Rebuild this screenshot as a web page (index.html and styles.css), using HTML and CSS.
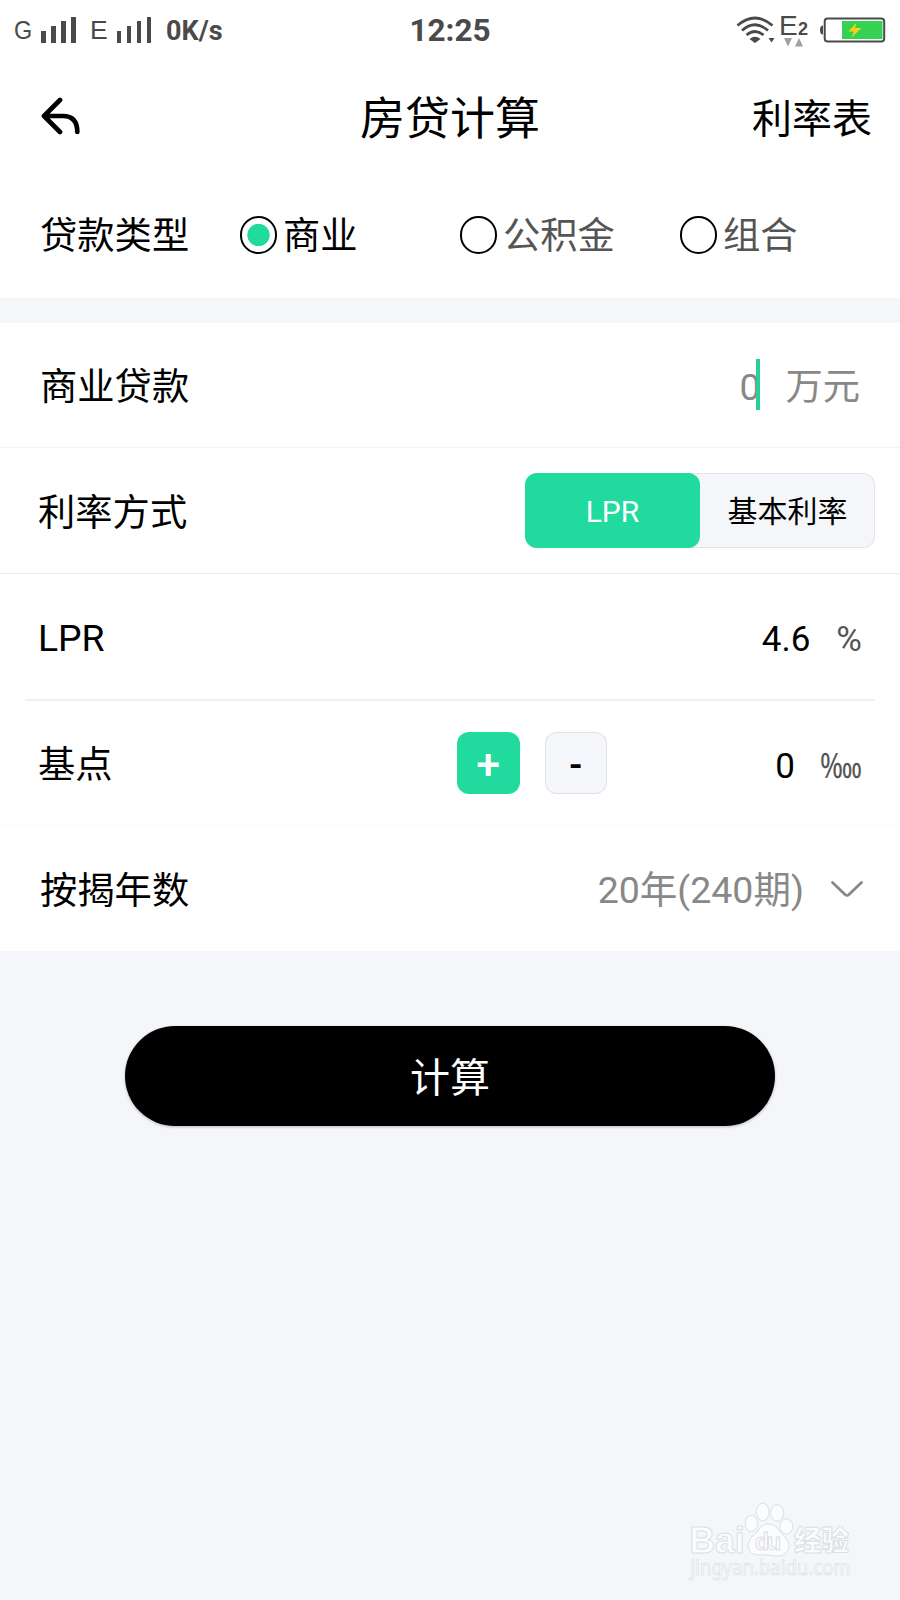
FILE: index.html
```
<!DOCTYPE html>
<html lang="zh-CN">
<head>
<meta charset="utf-8">
<title>房贷计算</title>
<link rel="stylesheet" href="styles.css">
</head>
<body>
<div class="screen">
  <div class="status">
    <div class="status-left">
      <span class="net">G</span>
      <svg class="bars" width="36" height="26" viewBox="0 0 36 26" fill="#4a4a4a"><path d="M0 14h5v12H0zM10 9h5v17h-5zM20 4h5v22h-5zM30 0h5v26h-5z"/></svg>
      <span class="net net-e">E</span>
      <svg class="bars" width="36" height="26" viewBox="0 0 36 26" fill="#4a4a4a"><path d="M0 14h4v12H0zM10 9h4v17h-4zM20 4h4v22h-4zM30 0h4v26h-4z"/></svg>
      <span class="speed">0K/s</span>
    </div>
    <div class="clock">12:25</div>
    <div class="status-right">
      <svg width="40" height="32" viewBox="736 14 40 32" fill="none" stroke="#4a4a4a" stroke-width="2.7"><path d="M737.5 25.5Q755 10.500 772.500 25.500M742 30.500Q755 19 768 30.500M746.500 35Q755 28 763.500 35"/><path d="M749.500 39Q755 34.500 760.500 39L755 43z" fill="#4a4a4a" stroke="none"/><path d="M768.500 38h6l-3 4.500z" fill="#4a4a4a" stroke="none"/></svg>
      <div class="sim">
        <div class="sim-top"><span class="net sim-e">E</span><b class="sim-n">2</b></div>
        <svg class="sim-arrows" width="20" height="9" viewBox="0 0 20 9" fill="#a0a0a0"><path d="M0 0h8L4 8.500zM11 8.500h8L15 0z"/></svg>
      </div>
      <svg width="66" height="26" viewBox="820 17 66 26"><path d="M823 25.500q-3 0-3 4.500t3 4.500z" fill="#4a4a4a"/><rect x="824.700" y="18.500" width="59.500" height="23" rx="3" fill="#fff" stroke="#4a4a4a" stroke-width="2"/><rect x="842" y="21" width="40.500" height="18" fill="#35d152"/><path d="M856.500 22.500L848.500 31.500h5.500L851.500 37.500L861.500 28h-6.500z" fill="#f5d31c"/></svg>
    </div>
  </div>

  <div class="header">
    <svg class="back" width="40" height="38" viewBox="41 97 40 38" fill="none" stroke="#000" stroke-width="4.700" stroke-linecap="round" stroke-linejoin="round"><path d="M60 100L44 116L60 132M44 116H63C72 116 77.300 121 77.300 132"/></svg>
    <div class="title">房贷计算</div>
    <div class="rates">利率表</div>
  </div>

  <div class="types">
    <div class="types-label">贷款类型</div>
    <div class="radio on"><i class="dot"></i><span>商业</span></div>
    <div class="radio"><i class="dot"></i><span>公积金</span></div>
    <div class="radio"><i class="dot"></i><span>组合</span></div>
  </div>

  <div class="rows">
    <div class="row amount">
      <span class="label">商业贷款</span>
      <span class="hint">0</span><i class="caret"></i>
      <span class="unit-wan">万元</span>
    </div>
    <div class="row mode">
      <span class="label">利率方式</span>
      <div class="segment"><div class="seg active">LPR</div><div class="seg">基本利率</div></div>
    </div>
    <div class="row lpr">
      <span class="label">LPR</span>
      <span class="value">4.6</span><span class="percent">%</span>
    </div>
    <div class="row points">
      <span class="label">基点</span>
      <div class="step plus"><span>+</span></div>
      <div class="step minus"><span>-</span></div>
      <span class="value zero">0</span>
      <svg class="myriad" width="42" height="40" viewBox="0 0 42 40"><text x="0" y="32" textLength="42" lengthAdjust="spacingAndGlyphs">‱</text></svg>
    </div>
    <div class="row years">
      <span class="label">按揭年数</span>
      <span class="term">20年(240期)</span>
      <svg class="chevron" width="32" height="17" viewBox="0 0 32 17" fill="none" stroke="#888" stroke-width="2.700" stroke-linecap="round"><path d="M1.500 1.500L14 13.500Q16 15.500 18 13.500L30.500 1.500"/></svg>
    </div>
  </div>

  <div class="calc">计算</div>

  <svg class="watermark" width="170" height="90" viewBox="688 1500 170 90" fill="#fbfcfe" stroke="#dcdee3" stroke-width="1">
    <text class="wm-bai" x="689.500" y="1553" textLength="55" lengthAdjust="spacingAndGlyphs">Bai</text>
    <ellipse cx="751.300" cy="1523.500" rx="6.300" ry="8.200"/>
    <ellipse cx="762.700" cy="1512" rx="6.300" ry="8.800"/>
    <ellipse cx="777.200" cy="1513" rx="6.500" ry="8.200"/>
    <ellipse cx="786.300" cy="1526.500" rx="6.500" ry="7.700"/>
    <path d="M768.500 1524C761 1524 759 1530 755 1534C749 1539 746 1545 750 1551C754 1557 762 1554 768.500 1555C775 1556 783 1558 787.500 1551C791 1545 788 1539 782 1534C778 1530 776 1524 768.500 1524z"/>
    <text class="wm-du" x="755" y="1550" textLength="26">du</text>
    <text class="wm-cn" x="794" y="1551" textLength="55" lengthAdjust="spacingAndGlyphs">经验</text>
    <text class="wm-url" x="690.500" y="1575" textLength="160" lengthAdjust="spacingAndGlyphs">jingyan.baidu.com</text>
  </svg>
</div>
</body>
</html>
```
FILE: styles.css
```
* { box-sizing: border-box; }
body {
  margin: 0;
  background: #f4f6fa;
  color: #000;
  font-family: Roboto, "Noto Sans CJK SC", sans-serif;
  font-size: 37.3px;
}
i { font-style: normal; }
svg { display: block; flex: none; }
.screen {
  width: 900px;
  height: 1600px;
  overflow: hidden;
  display: flex;
  flex-direction: column;
}

.status {
  height: 60px;
  flex: none;
  background: #fff;
  color: #4a4a4a;
  display: grid;
  grid-template-columns: 1fr auto 1fr;
  line-height: 30px;
}
.status-left { display: flex; padding: 17px 0 0 14px; }
.net { font-family: "Liberation Sans", sans-serif; font-size: 26.5px; line-height: 26px; width: 27px; flex: none; }
.status-left .net { transform: scaleX(0.88); transform-origin: left; }
.net-e { margin-left: 12px; width: 28px; }
.status-left .net-e { transform: translateX(1px); }
.speed { font-weight: 700; font-size: 27px; line-height: 29px; margin-left: 13px; }
.clock { font-weight: 700; font-size: 31.5px; padding-top: 16px; }
.status-right { display: flex; justify-content: flex-end; padding: 14px 14px 0 0; }
.status-right > svg:last-child { margin: 3px 0 0 12px; }
.sim { width: 28px; margin-left: 4px; }
.sim-top { display: flex; height: 24px; }
.sim-e { width: 18px; font-size: 28px; line-height: 24px; margin-left: -1px; }
.sim-n { font-family: "Liberation Sans", sans-serif; font-size: 18px; line-height: 31px; margin-left: 1px; }
.sim-arrows { margin-left: 4px; }

.header {
  height: 116px;
  flex: none;
  background: #fff;
  display: grid;
  grid-template-columns: 306px auto 1fr;
  align-items: center;
  padding: 0 28px 0 41px;
}
.back { margin-bottom: 4px; }
.title { font-size: 45px; line-height: 60px; margin: 4px 0 0 13px; }
.rates { font-size: 40px; line-height: 60px; margin-top: 4px; text-align: right; }

.types {
  height: 121.5px;
  flex: none;
  background: #fff;
  display: flex;
  align-items: flex-start;
  padding: 40px 0 0 40px;
  line-height: 40px;
}
.types-label { width: 199.5px; }
.radio { width: 220px; display: flex; color: #555; }
.radio span { padding-left: 6px; }
.radio.on { color: #000; }
.dot {
  width: 37.5px;
  height: 37.5px;
  flex: none;
  border: 2px solid #000;
  border-radius: 50%;
  display: block;
}
.radio.on .dot { background: radial-gradient(circle, #20da9e 10.800px, transparent 11.500px); }

.rows { margin-top: 25px; background: #fff; height: 628.500px; flex: none; }
.row { display: flex; align-items: center; line-height: 50px; height: 126px; border-bottom: 1px solid #ebebed; }
.label { margin-right: auto; padding-top: 4px; }
.amount { height: 125px; padding: 0 40px; border-color: #f3f3f4; }
.hint { color: #888; padding-top: 4px; margin-right: -4px; }
.caret { width: 4px; height: 51px; background: #28cf9b; position: relative; }
.unit-wan { color: #888; padding-top: 4px; margin-left: 25px; }
.mode { padding: 0 25px 0 38px; }
.mode .label { padding-top: 5px; }
.segment {
  width: 350px;
  height: 75px;
  display: flex;
  border-radius: 12px;
  background: #f4f6fa;
  box-shadow: inset 0 0 0 1px #e3e4e8;
  font-size: 30px;
  line-height: 77px;
  text-align: center;
}
.seg { width: 175px; }
.seg.active { background: #20da9e; color: #fff; border-radius: 12px; }
.lpr { height: 127.500px; margin: 0 25px; padding: 0 13px; border-bottom: 2px solid #f0f0f1; }
.lpr .value { margin-right: 1px; }
.value { font-size: 35px; padding-top: 7px; }
.percent { font-size: 35px; color: #555; margin-left: 25px; padding-top: 7px; }
.points { height: 125px; padding: 0 38px; border-color: #f9f9fa; }
.step {
  width: 62.500px;
  height: 62.500px;
  border-radius: 12px;
  display: flex;
  justify-content: center;
  margin-right: 25px;
  line-height: 66px;
  font-weight: 500;
  font-size: 38px;
}
.plus { background: #20da9e; color: #fff; font-size: 43px; line-height: 65px; }
.minus { background: #f4f6fa; box-shadow: inset 0 0 0 1px #e1e2e6; margin-right: 0; }
.zero { width: 188px; text-align: right; }
.myriad { font-size: 35px; fill: #555; margin: 5px 0 0 25px; font-weight: 300; }
.years { height: 125px; padding: 0 37px 0 40px; border: 0; }
.term { font-size: 37.500px; color: #888; padding-top: 3px; }
.chevron { margin: 2px 0 0 27px; }

.calc {
  width: 650px;
  height: 100px;
  flex: none;
  margin: 75px auto 0;
  border-radius: 50px;
  background: #000;
  color: #fff;
  font-size: 40px;
  line-height: 106px;
  text-align: center;
  box-shadow: 0 1px 3px rgba(0, 0, 0, 0.25);
}

.watermark { margin: auto 0 10px 688px; }
.wm-bai { font: 700 37px "Liberation Sans", sans-serif; }
.wm-du { font: 700 23px "Liberation Sans", sans-serif; }
.wm-cn { font: 900 28px "Noto Sans CJK SC", sans-serif; }
.wm-url { font: 21px "Noto Sans", sans-serif; stroke-width: 0.7px; }
```
